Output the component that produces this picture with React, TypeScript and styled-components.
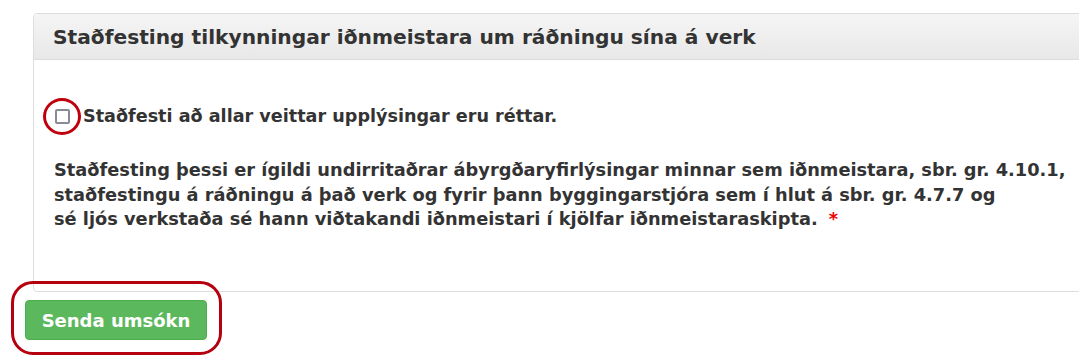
import React from "react";
import styled, { createGlobalStyle } from "styled-components";

const Global = createGlobalStyle`
  html, body { margin: 0; padding: 0; background: #fff; overflow: hidden; }
  body { font-family: "DejaVu Sans", "Liberation Sans", Arial, sans-serif; color: #333; }
  * { box-sizing: border-box; }
`;

const Page = styled.div`
  padding: 13px 0 0 25px;
  width: 1079px;
  height: 359px;
`;

const Panel = styled.section`
  margin-left: 8px;
  margin-right: -40px;
  border: 1px solid #ddd;
  border-radius: 4px 0 0 4px;
  background: #fff;
`;

const PanelHeading = styled.header`
  height: 46px;
  padding: 0 19px;
  display: flex;
  align-items: center;
  background: linear-gradient(#f5f5f5, #e8e8e8);
  border-bottom: 1px solid #ddd;
  border-radius: 3px 0 0 0;
`;

const Title = styled.h3`
  margin: 0;
  font-size: 20.2px;
  font-weight: bold;
  color: #333;
  white-space: nowrap;
`;

const PanelBody = styled.div`
  height: 231px;
  padding: 48px 19px 0 20px;
`;

const CheckRow = styled.label`
  display: flex;
  align-items: center;
  gap: 13px;
  font-size: 17.6px;
  font-weight: bold;
  height: 16px;
  white-space: nowrap;
`;

const BoxWrap = styled.span`
  position: relative;
  display: inline-flex;
  margin-left: 1px;
`;

const Box = styled.span`
  width: 15px;
  height: 15px;
  border: 2px solid #8a8a96;
  border-radius: 2px;
  background: #fff;
`;

const RingMark = styled.span`
  position: absolute;
  left: -12px;
  top: -11px;
  width: 38px;
  height: 37px;
  border: 3px solid #c0000c;
  border-radius: 50%;
  pointer-events: none;
`;

const Statement = styled.p`
  margin: 34px 0 0 0;
  font-size: 17.8px;
  font-weight: bold;
  line-height: 24.5px;
  color: #333;
  white-space: nowrap;
`;

const Required = styled.span`
  color: #e00;
  margin-left: 11px;
`;

const Actions = styled.div`
  padding-top: 8px;
`;

const ButtonWrap = styled.span`
  position: relative;
  display: inline-block;
`;

const SubmitButton = styled.button`
  width: 182px;
  height: 40px;
  padding: 0;
  border: 1px solid #4cae4c;
  border-radius: 4px;
  background: #5cb85c;
  color: #fff;
  font-family: "DejaVu Sans", "Liberation Sans", Arial, sans-serif;
  font-size: 18px;
  font-weight: bold;
  cursor: pointer;
`;

const RectMark = styled.span`
  position: absolute;
  left: -14px;
  top: -19px;
  width: 211px;
  height: 74px;
  border: 3px solid #b5000e;
  border-radius: 22px;
  pointer-events: none;
`;

export default function App() {
  return (
    <>
      <Global />
      <Page>
        <Panel>
          <PanelHeading>
            <Title>Staðfesting tilkynningar iðnmeistara um ráðningu sína á verk</Title>
          </PanelHeading>
          <PanelBody>
            <CheckRow>
              <BoxWrap>
                <Box />
                <RingMark />
              </BoxWrap>
              Staðfesti að allar veittar upplýsingar eru réttar.
            </CheckRow>
            <Statement>
              Staðfesting þessi er ígildi undirritaðrar ábyrgðaryfirlýsingar minnar sem iðnmeistara, sbr. gr. 4.10.1,
              <br />
              staðfestingu á ráðningu á það verk og fyrir þann byggingarstjóra sem í hlut á sbr. gr. 4.7.7 og
              <br />
              sé ljós verkstaða sé hann viðtakandi iðnmeistari í kjölfar iðnmeistaraskipta.
              <Required>*</Required>
            </Statement>
          </PanelBody>
        </Panel>
        <Actions>
          <ButtonWrap>
            <SubmitButton>Senda umsókn</SubmitButton>
            <RectMark />
          </ButtonWrap>
        </Actions>
      </Page>
    </>
  );
}
